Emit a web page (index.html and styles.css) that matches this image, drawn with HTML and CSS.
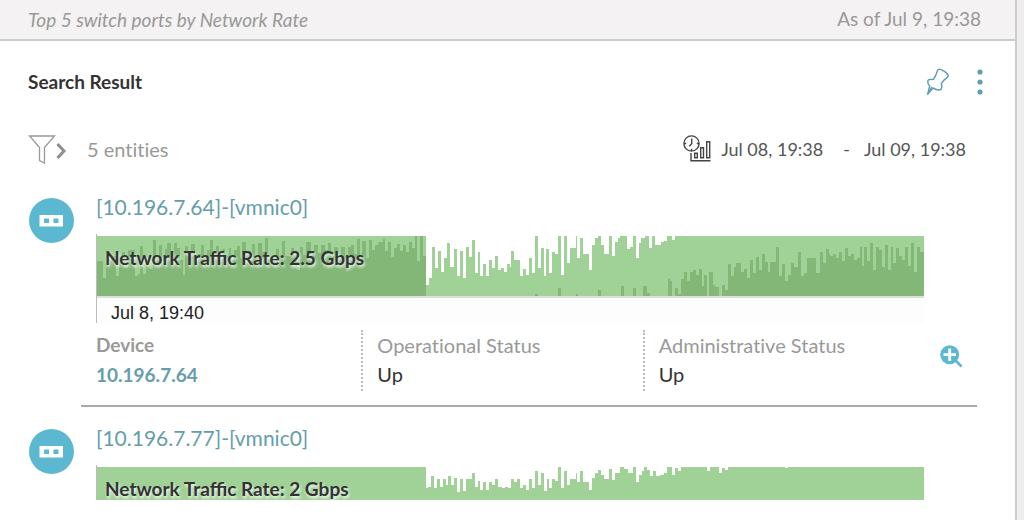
FILE: index.html
```html
<!DOCTYPE html>
<html lang="en">
<head>
<meta charset="utf-8">
<title>Search Result</title>
<link rel="stylesheet" href="styles.css">
</head>
<body>
<main class="card">
  <header class="query">
    <em class="query-text">Top 5 switch ports by Network Rate</em>
    <span class="query-time">As of Jul 9, 19:38</span>
  </header>

  <div class="title-row">
    <h1 class="title">Search Result</h1>
    <button class="icon-button" type="button" aria-label="Pin">
      <svg width="24" height="28" viewBox="0 0 24 28" fill="none" stroke="#5f9fb0" stroke-width="1.5" stroke-linejoin="round" stroke-linecap="round">
        <path d="M10.500 2.600C11 1.400 12 1 13.200 1.400C16.600 2.400 19 4 20.700 6.500C21.500 7.800 21 8.800 19.900 9.600C17.500 11.400 15.700 13.200 14.400 15.500C14.800 17.400 14.900 19 14.500 20.500C14.100 22 12.700 22.200 11.200 22C9.300 21.600 7.700 21 6 20L0.800 26L2.700 18C0.900 16.200 0.500 14.300 1 12.600C1.300 11.700 1.900 11.400 2.900 11.500L6.500 11.300C8.300 8.700 9.600 5.600 10.500 2.600Z"/>
        <path d="M0.800 26L4.500 19.500"/>
      </svg>
    </button>
    <button class="icon-button more" type="button" aria-label="More options">
      <svg width="6" height="26" viewBox="0 0 6 26" fill="#5f9fb0"><circle cx="3" cy="3" r="2.600"/><circle cx="3" cy="13" r="2.600"/><circle cx="3" cy="23" r="2.600"/></svg>
    </button>
  </div>

  <div class="filter-row">
    <button class="icon-button" type="button" aria-label="Show filters">
      <svg width="40" height="30" viewBox="0 0 40 30" fill="none">
        <path d="M1.500 2H26.500L16.500 13.500V29L11.500 26.500V13.500Z" stroke="#999" stroke-width="1.300"/>
        <path d="M29.500 10L36 17L29.500 24" stroke="#8e8e8e" stroke-width="3"/>
      </svg>
    </button>
    <span class="count">5 entities</span>
    <button class="range" type="button">
      <svg width="28" height="28" viewBox="0 0 28 28" fill="none" stroke="#444" stroke-width="1.400">
        <circle cx="8.500" cy="8.500" r="7.600"/>
        <path d="M8.700 3.500V8.700L6.300 11.200M1 8.500H3.200M13.800 8.500H16M8.500 13.800V16"/>
        <path d="M8 18V25.800H27.500"/>
        <path d="M11.700 18.200H14.300V22.800H11.700ZM17.700 12.700H20.500V22.800H17.700ZM23.700 6.700H26.700V22.800H23.700Z"/>
      </svg>
      <span>Jul 08, 19:38</span><span class="dash">-</span><span>Jul 09, 19:38</span>
    </button>
  </div>

  <section class="result">
    <svg class="badge" viewBox="0 0 45 45"><circle cx="22.500" cy="22.500" r="22.500" fill="#5bb8d0"/><path fill="#fff" fill-rule="evenodd" d="M10.500 17H34V28.500H10.500ZM15 20.500V25H20V20.500ZM24.500 20.500V25H29.500V20.500Z"/></svg>
    <div class="body">
      <a class="name" href="#">[10.196.7.64]-[vmnic0]</a>
      <div class="chart">
        <svg class="plot tall" viewBox="0 0 827 60" preserveAspectRatio="none">
          <path class="light" d="M0 60V0H329V49H332V42H335V11H338V32H341V15H344V36H347V22H350V7H353V31H357V13H360V40H363V15H366V42H369V11H372V21H375V4H378V37H381V16H383V40H386V28H389V40H392V24H395V32H398V20H401V34H404V32H407V36H410V28H413V31H414V15H417V24H423V40H426V33H429V39H432V22H435V37H438V0H441V32H444V12H447V40H449V13H452V37H455V16H458V18H461V0H464V39H467V0H470V27H473V12H479V0H480V22H483V2H486V18H492V34H495V9H498V2H501V0H504V9H507V18H512V0H515V20H518V6H521V2H523V0H530V13H533V11H536V0H539V22H542V7H544V2H548V0H552V12H555V0H558V9H564V6H567V5H570V0H575V4H578V0H827V60Z"/>
          <path class="dark" d="M0 60V25H6V42H9V30H12V20H19V40H22V24H25V16H28V31H31V14H38V40H41V38H43V10H46V38H49V24H53V33H56V4H59V22H62V9H65V27H68V13H70V7H74V15H77V7H80V12H83V24H86V39H88V10H91V20H94V8H98V26H101V18H104V9H107V22H110V14H113V4H116V17H119V10H122V26H125V13H128V20H132V12H134V24H137V14H140V10H143V22H145V6H149V16H152V24H155V8H158V22H161V7H165V16H168V2H171V24H179V13H182V20H185V5H188V20H194V12H197V19H200V34H203V11H206V19H209V6H214V18H217V9H221V17H224V9H228V14H231V7H234V20H237V11H241V20H244V11H248V20H251V11H254V9H257V18H260V3H263V19H265V5H269V22H272V4H275V14H278V9H281V6H286V3H288V15H291V6H294V21H297V12H300V8H303V15H306V9H309V16H312V6H315V12H318V0H320V25H323V0H326V20H329V60ZM438 60V58H441V60ZM461 60V52H464V60ZM479 60V58H481V60ZM501 60V54H504V60ZM524 60V50H527V60ZM536 60V52H539V60ZM546 60V50H550V57H553V60Z"/>
          <path class="dark" d="M571 60V43H573V45H575V60ZM578 60V52H581V58H584V43H587V36H590V45H593V36H596V34H599V39H602V33H605V50H607V39H610V60ZM612 60V36H616V60Z"/>
          <path class="dark" d="M616 60V49H618V51H622V60ZM625 60V49H628V54H631V28H634V40H637V31H639V27H644V36H647V33H650V42H653V24H656V37H659V21H662V34H665V18H668V26H671V36H673V26H679V11H682V40H685V28H688V45H691V39H694V27H697V31H701V16H704V40H707V37H710V22H719V37H723V16H726V27H729V13H732V18H733V20H736V18H739V22H742V16H745V25H748V12H751V20H754V18H757V24H760V22H763V11H765V30H767V11H770V25H773V7H776V34H779V11H782V14H785V31H788V9H791V34H794V11H796V27H799V12H802V20H805V24H808V11H811V30H814V7H817V36H820V11H823V16H827V60Z"/>
        </svg>
        <strong class="rate">Network Traffic Rate: 2.5 Gbps</strong>
        <div class="axis">Jul 8, 19:40</div>
      </div>
      <div class="details">
        <dl class="facts">
          <div class="fact"><dt class="strong">Device</dt><dd><a class="device" href="#">10.196.7.64</a></dd></div>
          <div class="fact"><dt>Operational Status</dt><dd>Up</dd></div>
          <div class="fact"><dt>Administrative Status</dt><dd>Up</dd></div>
        </dl>
        <button class="icon-button zoom" type="button" aria-label="Zoom in">
          <svg width="23" height="23" viewBox="0 0 23 23"><path d="M15.500 15.500L21.500 21.500" stroke="#5bb8d0" stroke-width="2.600"/><circle cx="9.700" cy="9.700" r="9.500" fill="#5bb8d0"/><path d="M9.700 3.500V16M3.500 9.700H16" stroke="#fff" stroke-width="2.800"/></svg>
        </button>
      </div>
    </div>
  </section>
  <hr class="divider">
  <section class="result">
    <svg class="badge" viewBox="0 0 45 45"><circle cx="22.500" cy="22.500" r="22.500" fill="#5bb8d0"/><path fill="#fff" fill-rule="evenodd" d="M10.500 17H34V28.500H10.500ZM15 20.500V25H20V20.500ZM24.500 20.500V25H29.500V20.500Z"/></svg>
    <div class="body">
      <a class="name" href="#">[10.196.7.77]-[vmnic0]</a>
      <div class="chart">
        <svg class="plot short" viewBox="0 0 827 33" preserveAspectRatio="none">
          <path class="light" d="M0 33V0H329V21H331V20H334V9H337V21H340V12H343V20H346V12H349V18H351V9H354V18H357V11H360V25H363V12H366V24H369V12H375V6H378V20H381V14H383V23H386V15H389V23H392V15H395V18H398V12H401V20H405V21H408V20H411V21H414V12H417V15H420V12H423V21H426V18H429V23H432V12H435V21H438V4H441V18H444V6H447V24H450V12H452V21H455V12H458V14H461V0H464V21H467V4H470V18H473V12H479V6H480V15H483V4H486V15H492V23H495V11H498V6H501V3H504V8H507V12H512V2H515V13H518V6H523V0H527V2H531V6H536V0H539V15H542V8H545V4H547V0H550V3H553V9H556V4H559V9H563V8H567V6H570V0H575V8H578V1H581V4H584V0H610V4H613V0H622V6H625V1H628V3H631V0H688V1H691V0H827V33Z"/>
        </svg>
        <strong class="rate">Network Traffic Rate: 2 Gbps</strong>
      </div>
    </div>
  </section>
</main>
</body>
</html>
```
FILE: styles.css
```css
* { box-sizing: border-box; }
body {
  margin: 0;
  padding-right: 7px;
  background: #efeeee;
  color: #333;
  font: 20px/24px Lato, sans-serif;
}
a { color: #659dab; text-decoration: none; }
button { padding: 0; border: 0; background: none; color: inherit; font: inherit; }
svg { display: block; }
.card { min-height: 100vh; background: #fff; border-right: 2px solid #ccc; }
.query {
  display: flex;
  justify-content: space-between;
  height: 41px;
  padding: 7px 34px 0 28px;
  background: #f4f2f2;
  border-bottom: 2px solid #ccc;
  color: #999;
  font-size: 19px;
}
.query-text { padding-top: 1px; }
.title-row {
  display: flex;
  align-items: center;
  padding: 27px 32px 0 28px;
}
.title { margin: 0; flex: 1; font-size: 19px; font-weight: 700; }
.more { margin-left: 26px; }
.filter-row {
  display: flex;
  align-items: center;
  margin-top: 38px;
  padding: 0 49px 0 28px;
}
.count { margin-left: 19px; color: #999; font-variant-ligatures: none; }
.range { display: flex; align-items: center; margin-left: auto; color: #555; font-size: 18px; }
.range svg { margin-right: 10px; }
.dash { margin: 0 14px 0 20px; }
.result { display: flex; gap: 22px; padding: 0 38px 0 29px; margin-top: 30px; }
.badge { width: 45px; height: 45px; flex: none; margin-top: 4px; }
.body { flex: 1; }
.name { display: block; font-size: 21px; line-height: 26px; }
.chart { position: relative; margin: 14px 53px 0 0; padding-top: 2px; border-left: 1px solid #bbb; }
.plot { width: 100%; }
.tall { height: 60px; }
.short { height: 33px; }
.light { fill: #a0d196; }
.dark { fill: #83b777; }
.rate {
  position: absolute;
  top: 12px;
  left: 8px;
  font-size: 19px;
  text-shadow: 1px 2px 3px #fff;
}
.axis {
  padding: 5px 0 0 14px;
  border-top: 2px solid #ddd;
  background: #fdfdfd;
  color: #222;
  font: 18px/20px "Liberation Sans", sans-serif;
}
.details { display: flex; padding-right: 14px; margin-top: 7px; }
.facts { display: grid; grid-template-columns: repeat(3, 1fr); flex: 1; margin: 0 0 0 -16px; }
.fact { padding: 2px 0 0 14px; border-left: 2px dotted #bbb; font-variant-ligatures: none; }
.fact:first-child { border-color: transparent; }
dt { color: #999; line-height: 26px; }
dd { margin: 0; line-height: 32px; }
.strong, .device { font-weight: 700; font-size: 19px; }
.zoom { align-self: flex-start; margin: 15px 0 0 16px; }
.divider { height: 2px; margin: 14px 38px 0 81px; border: 0; background: #aaa; }
.divider + .result { margin-top: 18px; }
```
